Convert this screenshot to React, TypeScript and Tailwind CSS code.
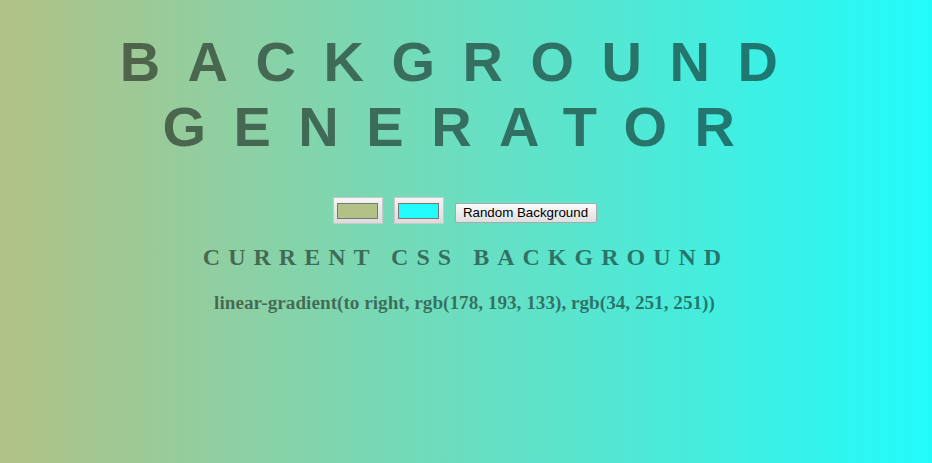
// App.tsx

import React from "react";

const colors = ["#b2c185", "#22fbfb"];

const ColorBox = ({ color }: { color: string }) => {
  return (
    <div className="w-[50px] h-[27px] border border-[#c9c9c9] bg-[linear-gradient(to_bottom,#f4f4f4,#dcdcdc)] flex items-center justify-center">
      <div
        className="w-[41px] h-[16px] border border-[#777]"
        style={{ backgroundColor: color }}
      />
    </div>
  );
};

const App: React.FC = () => {
  return (
    <div className="h-screen w-full overflow-hidden bg-[linear-gradient(to_right,rgb(178,193,133),rgb(34,251,251))] font-['Liberation_Sans',Arial,sans-serif]">
      <h1 className="pt-[30px] pr-[7px] text-center text-[56px] font-bold uppercase tracking-[27.5px] text-black/50 leading-[64.5px]">
        <span className="block">Background</span>
        <span className="block">Generator</span>
      </h1>

      <div className="mt-[38px] flex justify-center items-start">
        <ColorBox color={colors[0]} />
        <div className="ml-[11px]">
          <ColorBox color={colors[1]} />
        </div>
        <button className="ml-[11px] mr-[3px] mt-[6px] w-[142px] h-[20px] border border-[#a9a9a9] rounded-[2px] bg-[linear-gradient(to_bottom,#fbfbfb,#dfdfdf)] text-[13.33px] leading-[18px] text-black">
          Random Background
        </button>
      </div>

      <h3 className="mt-[20px] text-center font-['Liberation_Serif','Times_New_Roman',serif] text-[24px] font-bold uppercase tracking-[8px] text-black/50 leading-[27.5px]">
        Current CSS Background
      </h3>

      <p className="mt-[20px] pr-[3px] text-center font-['Liberation_Serif','Times_New_Roman',serif] text-[19.2px] font-bold text-black/50 leading-[22px]">
        linear-gradient(to right, rgb(178, 193, 133), rgb(34, 251, 251))
      </p>
    </div>
  );
};

export default App;
